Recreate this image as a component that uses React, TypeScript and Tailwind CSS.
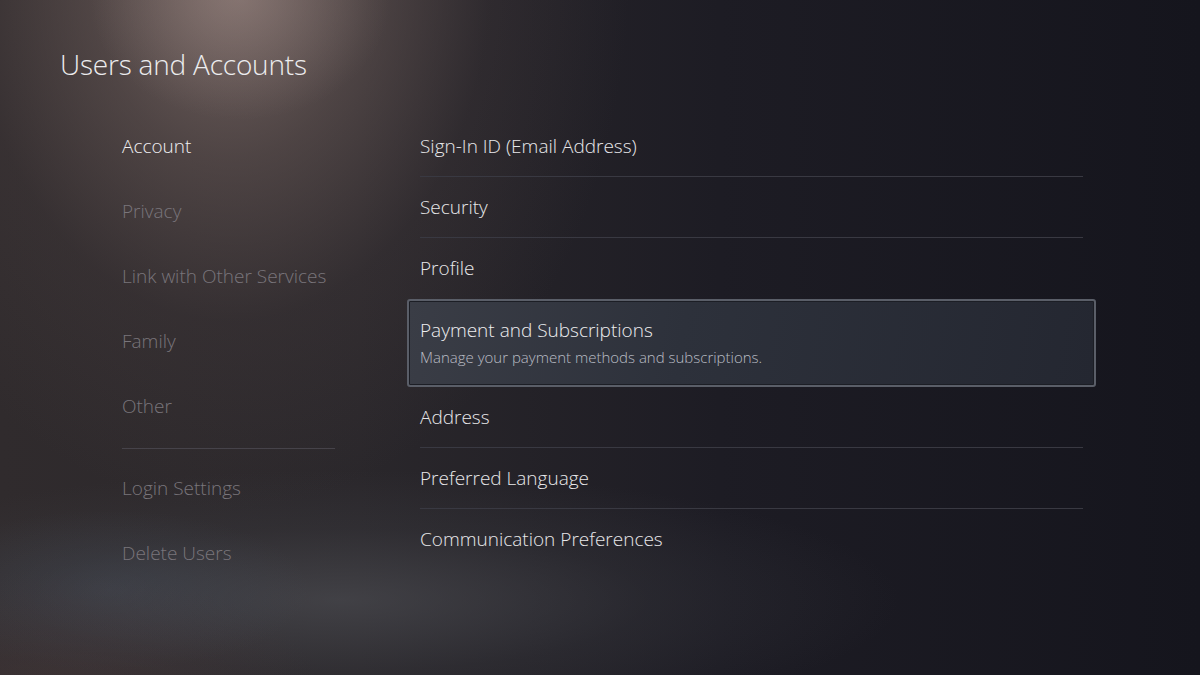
const LEFT = ["Account", "Privacy", "Link with Other Services", "Family", "Other"];
const LEFT_BOTTOM = ["Login Settings", "Delete Users"];

const RIGHT_TOP = ["Sign-In ID (Email Address)", "Security", "Profile"];
const RIGHT_BOTTOM = ["Address", "Preferred Language", "Communication Preferences"];

export default function App() {
  return (
    <div
      className="relative w-[1200px] h-[675px] overflow-hidden bg-[#17171f] text-[#e8e8ea]"
      style={{ fontFamily: '"Open Sans", "Noto Sans", sans-serif' }}
    >
      {/* background lighting */}
      <div className="absolute inset-0 bg-[linear-gradient(90deg,#302b2d_0%,#2a272b_30%,#1d1c24_60%,#15151d_100%)]" />
      <div className="absolute inset-0 bg-[radial-gradient(ellipse_400px_540px_at_230px_-30px,rgba(150,128,122,0.7)_0%,rgba(120,102,98,0.45)_35%,rgba(85,72,72,0.2)_65%,transparent_100%)]" />
      <div className="absolute inset-0 bg-[radial-gradient(ellipse_150px_120px_at_240px_0px,rgba(170,150,145,0.35)_0%,transparent_100%)]" />
      <div className="absolute inset-0 bg-[radial-gradient(ellipse_560px_130px_at_340px_600px,rgba(88,90,96,0.5)_0%,rgba(70,72,78,0.22)_55%,transparent_100%)]" />
      <div className="absolute inset-0 bg-[radial-gradient(ellipse_200px_80px_at_110px_590px,rgba(75,88,105,0.3)_0%,transparent_100%)]" />
      <div className="absolute inset-0 bg-[radial-gradient(ellipse_260px_120px_at_60px_690px,rgba(80,60,60,0.35)_0%,transparent_100%)]" />

      <div className="relative">
        <h1 className="pl-[60px] pt-[44px] text-[28px] font-light leading-[40px] tracking-[-0.2px] text-[#ececee]">
          Users and Accounts
        </h1>

        <div className="flex pt-[30px]">
          {/* left menu */}
          <div className="w-[407px] pl-[122px] shrink-0">
            {LEFT.map((t, i) => (
              <div
                key={t}
                className={`h-[65px] flex items-center text-[19px] font-light ${
                  i === 0 ? "text-[#f0f0f2]" : "text-[#79757b]"
                }`}
              >
                {t}
              </div>
            ))}
            <div className="mt-[9px] mb-[7px] w-[213px] h-px bg-[#46434a]" />
            {LEFT_BOTTOM.map((t) => (
              <div key={t} className="h-[65px] flex items-center text-[19px] font-light text-[#79757b]">
                {t}
              </div>
            ))}
          </div>

          {/* right list */}
          <div className="w-[689px] pt-[2px]">
            {RIGHT_TOP.map((t, i) => (
              <div key={t} className="px-[13px]">
                <div
                  className={`h-[61px] flex items-center text-[19px] font-light ${
                    i < 2 ? "border-b border-[#393942]" : ""
                  }`}
                >
                  {t}
                </div>
              </div>
            ))}

            <div className="h-[88px] rounded-[3px] border-2 border-[#5a5e68] bg-[linear-gradient(100deg,#3a3d46_0%,#2d313b_40%,#242731_100%)] shadow-[inset_0_0_0_1px_#1c1e25] px-[11px] flex flex-col justify-center">
              <div className="text-[19px] font-light leading-[26px] text-[#eeeef0] -mt-[3px]">Payment and Subscriptions</div>
              <div className="mt-[4px] text-[15px] font-light leading-[20px] text-[#b9bcc4]">
                Manage your payment methods and subscriptions.
              </div>
            </div>

            {RIGHT_BOTTOM.map((t, i) => (
              <div key={t} className="px-[13px]">
                <div
                  className={`h-[61px] flex items-center text-[19px] font-light ${
                    i < 2 ? "border-b border-[#393942]" : ""
                  }`}
                >
                  {t}
                </div>
              </div>
            ))}
          </div>
        </div>
      </div>
    </div>
  );
}
